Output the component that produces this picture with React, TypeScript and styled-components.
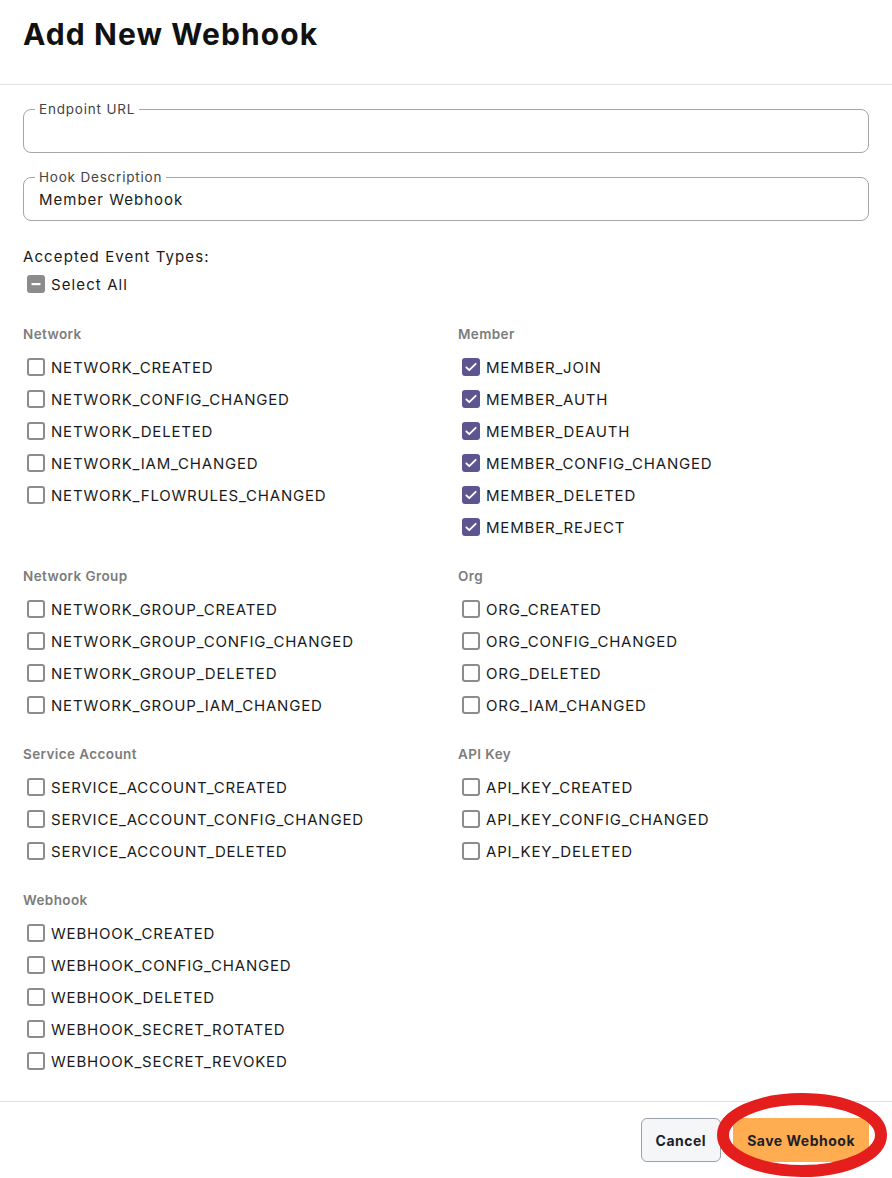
import React, { useState } from 'react'
import styled, { createGlobalStyle } from 'styled-components'

const GlobalStyle = createGlobalStyle`
  html, body {
    margin: 0;
    padding: 0;
    background: #ffffff;
  }
  body {
    font-family: Inter, "Open Sans", "Liberation Sans", sans-serif;
    color: #1a1a1a;
  }
  * {
    box-sizing: border-box;
  }
`

const Page = styled.div`
  width: 892px;
  min-height: 1178px;
  display: flex;
  flex-direction: column;
`

const Header = styled.div`
  height: 85px;
  padding: 14px 23px 0;
  border-bottom: 1px solid #e2e2e2;
`

const Title = styled.h1`
  margin: 0;
  font-size: 30px;
  line-height: 40px;
  font-weight: 700;
  color: #111111;
  letter-spacing: 1.1px;
`

const Content = styled.div`
  padding: 24px 23px 24px;
  display: flex;
  flex-direction: column;
`

const Field = styled.div`
  position: relative;
  margin-bottom: 24px;
`

const FieldLabel = styled.span`
  position: absolute;
  top: -9px;
  left: 12px;
  padding: 0 4px;
  background: #ffffff;
  font-size: 13.5px;
  line-height: 18px;
  color: #444444;
  letter-spacing: 0.8px;
`

const Input = styled.input`
  width: 100%;
  height: 44px;
  border: 1px solid #a6a6a6;
  border-radius: 8px;
  padding: 0 15px;
  font-family: inherit;
  font-size: 15px;
  color: #1a1a1a;
  letter-spacing: 1px;
  outline: none;
  background: transparent;
`

const EventTitle = styled.div`
  margin-top: 2px;
  font-size: 15px;
  line-height: 20px;
  letter-spacing: 1.1px;
  color: #1a1a1a;
`

const SelectAllRow = styled.label`
  margin-top: 5px;
  height: 24px;
  display: flex;
  align-items: center;
  gap: 6px;
  padding-left: 4px;
  font-size: 15px;
  letter-spacing: 1.1px;
`

const Grid = styled.div`
  margin-top: 26px;
  display: grid;
  grid-template-columns: 1fr 1fr;
  column-gap: 24px;
  row-gap: 21px;
`

const Section = styled.div`
  display: flex;
  flex-direction: column;
`

const SectionTitle = styled.div`
  height: 24px;
  margin-bottom: 5px;
  display: flex;
  align-items: center;
  font-size: 13.5px;
  font-weight: 600;
  letter-spacing: 0.4px;
  color: #7c7c7c;
`

const Row = styled.label`
  height: 32px;
  display: flex;
  align-items: center;
  gap: 6px;
  padding-left: 4px;
  font-size: 15px;
  letter-spacing: 0.8px;
  color: #1a1a1a;
  cursor: pointer;
`

const Box = styled.span<{ $checked?: boolean; $mixed?: boolean }>`
  width: 18px;
  height: 18px;
  border-radius: 3px;
  flex-shrink: 0;
  display: flex;
  align-items: center;
  justify-content: center;
  border: ${(p) => (p.$checked || p.$mixed ? 'none' : '2px solid #8c8c8c')};
  background: ${(p) => (p.$checked ? '#5e5590' : p.$mixed ? '#8c8c8c' : '#ffffff')};
`

const Footer = styled.div`
  border-top: 1px solid #e2e2e2;
  padding: 16px 23px 16px;
  display: flex;
  justify-content: flex-end;
  gap: 12px;
`

const Button = styled.button<{ $primary?: boolean }>`
  position: relative;
  height: 44px;
  padding: 0 ${(p) => (p.$primary ? '14px' : '14px')};
  border-radius: 6px;
  border: ${(p) => (p.$primary ? 'none' : '1px solid #9aa1a8')};
  background: ${(p) => (p.$primary ? '#ffad50' : '#f4f6f8')};
  color: #1d1f2a;
  font-family: inherit;
  font-size: 14px;
  font-weight: 700;
  letter-spacing: 0.5px;
  cursor: pointer;
`

const Highlight = styled.svg`
  position: absolute;
  left: -16px;
  top: -25px;
  pointer-events: none;
`

type SectionData = { title: string; events: string[] }

const sections: SectionData[] = [
  {
    title: 'Network',
    events: ['NETWORK_CREATED', 'NETWORK_CONFIG_CHANGED', 'NETWORK_DELETED', 'NETWORK_IAM_CHANGED', 'NETWORK_FLOWRULES_CHANGED'],
  },
  {
    title: 'Member',
    events: ['MEMBER_JOIN', 'MEMBER_AUTH', 'MEMBER_DEAUTH', 'MEMBER_CONFIG_CHANGED', 'MEMBER_DELETED', 'MEMBER_REJECT'],
  },
  {
    title: 'Network Group',
    events: ['NETWORK_GROUP_CREATED', 'NETWORK_GROUP_CONFIG_CHANGED', 'NETWORK_GROUP_DELETED', 'NETWORK_GROUP_IAM_CHANGED'],
  },
  {
    title: 'Org',
    events: ['ORG_CREATED', 'ORG_CONFIG_CHANGED', 'ORG_DELETED', 'ORG_IAM_CHANGED'],
  },
  {
    title: 'Service Account',
    events: ['SERVICE_ACCOUNT_CREATED', 'SERVICE_ACCOUNT_CONFIG_CHANGED', 'SERVICE_ACCOUNT_DELETED'],
  },
  {
    title: 'API Key',
    events: ['API_KEY_CREATED', 'API_KEY_CONFIG_CHANGED', 'API_KEY_DELETED'],
  },
  {
    title: 'Webhook',
    events: ['WEBHOOK_CREATED', 'WEBHOOK_CONFIG_CHANGED', 'WEBHOOK_DELETED', 'WEBHOOK_SECRET_ROTATED', 'WEBHOOK_SECRET_REVOKED'],
  },
]

const CheckIcon = () => (
  <svg width="14" height="14" viewBox="0 0 24 24" fill="none">
    <path d="M4 12.5l5 5L20 6.5" stroke="#ffffff" strokeWidth="3.2" strokeLinecap="round" strokeLinejoin="round" />
  </svg>
)

const MixedIcon = () => (
  <svg width="12" height="12" viewBox="0 0 12 12">
    <rect x="1.5" y="5" width="9" height="2.2" fill="#ffffff" />
  </svg>
)

const App: React.FC = () => {
  const [selected, setSelected] = useState<string[]>(sections[1].events)
  const [description, setDescription] = useState('Member Webhook')
  const [url, setUrl] = useState('')

  const toggle = (event: string) => {
    setSelected((prev) => (prev.includes(event) ? prev.filter((e) => e !== event) : [...prev, event]))
  }

  return (
    <>
      <GlobalStyle />
      <Page>
        <Header>
          <Title>Add New Webhook</Title>
        </Header>
        <Content>
          <Field>
            <FieldLabel>Endpoint URL</FieldLabel>
            <Input value={url} onChange={(e) => setUrl(e.target.value)} />
          </Field>
          <Field>
            <FieldLabel>Hook Description</FieldLabel>
            <Input value={description} onChange={(e) => setDescription(e.target.value)} />
          </Field>
          <EventTitle>Accepted Event Types:</EventTitle>
          <SelectAllRow>
            <Box $mixed>
              <MixedIcon />
            </Box>
            Select All
          </SelectAllRow>
          <Grid>
            {sections.map((section) => (
              <Section key={section.title}>
                <SectionTitle>{section.title}</SectionTitle>
                {section.events.map((event) => {
                  const checked = selected.includes(event)
                  return (
                    <Row key={event} onClick={() => toggle(event)}>
                      <Box $checked={checked}>{checked && <CheckIcon />}</Box>
                      {event}
                    </Row>
                  )
                })}
              </Section>
            ))}
          </Grid>
        </Content>
        <Footer>
          <Button>Cancel</Button>
          <Button $primary>
            Save Webhook
            <Highlight width="170" height="84" viewBox="0 0 170 84">
              <ellipse cx="85" cy="42" rx="79" ry="36" fill="none" stroke="#e41d1d" strokeWidth="12" />
            </Highlight>
          </Button>
        </Footer>
      </Page>
    </>
  )
}

export default App
